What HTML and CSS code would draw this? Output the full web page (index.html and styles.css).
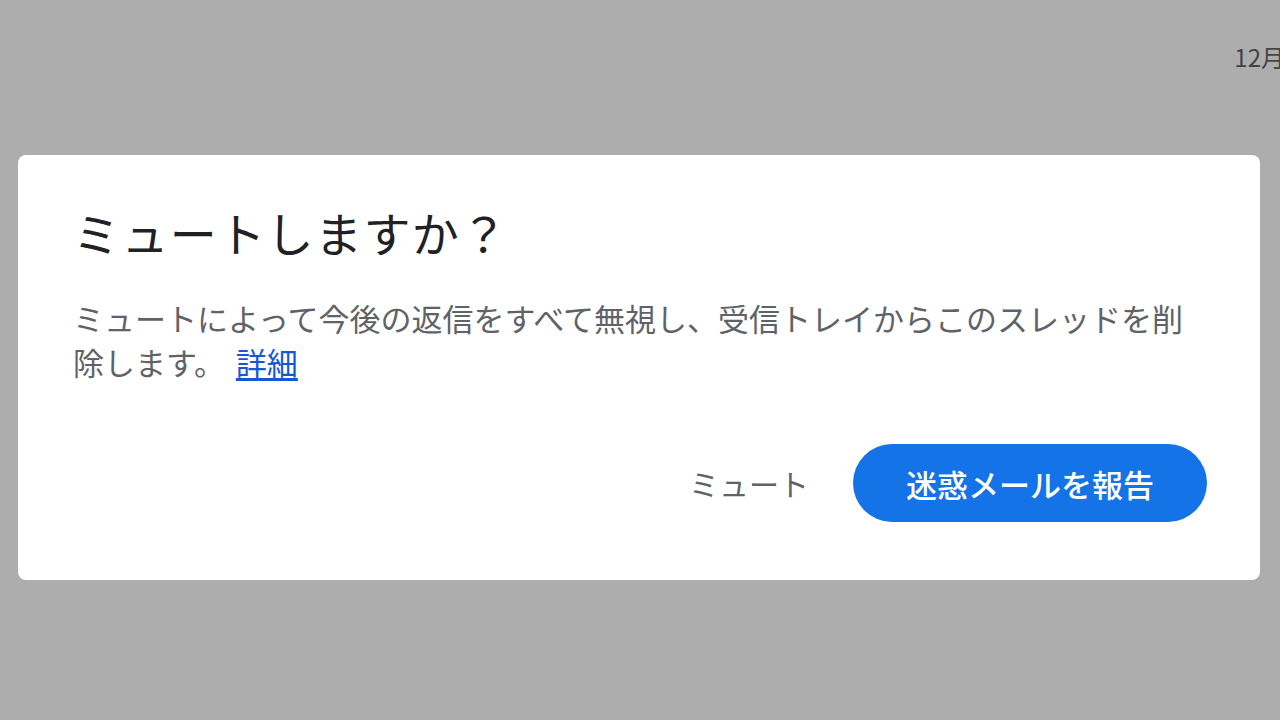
FILE: index.html
```html
<!DOCTYPE html>
<html lang="ja">
<head>
<meta charset="utf-8">
<link rel="stylesheet" href="styles.css">
</head>
<body>
  <div class="topbar"><span class="date">12月</span></div>
  <div class="dialog">
    <h1 class="title">ミュートしますか？</h1>
    <p class="desc">ミュートによって今後の返信をすべて無視し、受信トレイからこのスレッドを削除します。 <a class="link" href="#">詳細</a></p>
    <div class="actions">
      <button class="btn-text">ミュート</button>
      <button class="btn-primary">迷惑メールを報告</button>
    </div>
  </div>
</body>
</html>
```
FILE: styles.css
```css
html, body {
  margin: 0;
  padding: 0;
}
body {
  width: 1280px;
  height: 720px;
  overflow: hidden;
  background: #adadad;
  font-family: "Noto Sans CJK JP", "Noto Sans", sans-serif;
  display: flex;
  flex-direction: column;
}
.topbar {
  height: 155px;
  display: flex;
  justify-content: flex-end;
  align-items: flex-start;
}
.date {
  margin-top: 40px;
  margin-right: -5px;
  font-size: 24px;
  line-height: 34px;
  color: #444;
  white-space: nowrap;
}
.dialog {
  margin-left: 18px;
  width: 1242px;
  height: 425px;
  box-sizing: border-box;
  background: #fff;
  border-radius: 8px;
  padding: 48px 53px 58px 55px;
  display: flex;
  flex-direction: column;
}
.title {
  margin: 0;
  font-size: 47px;
  line-height: 57px;
  font-weight: 400;
  letter-spacing: 1.4px;
  color: #202124;
}
.desc {
  margin: 36px 0 0;
  font-size: 31px;
  line-height: 44px;
  color: #5f6368;
}
.link {
  margin-left: 4px;
  color: #1558d6;
  text-decoration: underline;
  text-underline-offset: 3px;
}
.actions {
  margin-top: 60px;
  display: flex;
  justify-content: flex-end;
  align-items: center;
}
.btn-text {
  border: none;
  background: none;
  font-family: inherit;
  font-size: 30px;
  color: #5f6368;
  padding: 0 22px;
  height: 78px;
  margin-right: 22px;
}
.btn-primary {
  border: none;
  background: #1473e6;
  color: #fff;
  font-family: inherit;
  font-size: 31px;
  font-weight: 500;
  height: 78px;
  padding: 0 53px;
  border-radius: 39px;
}
```
